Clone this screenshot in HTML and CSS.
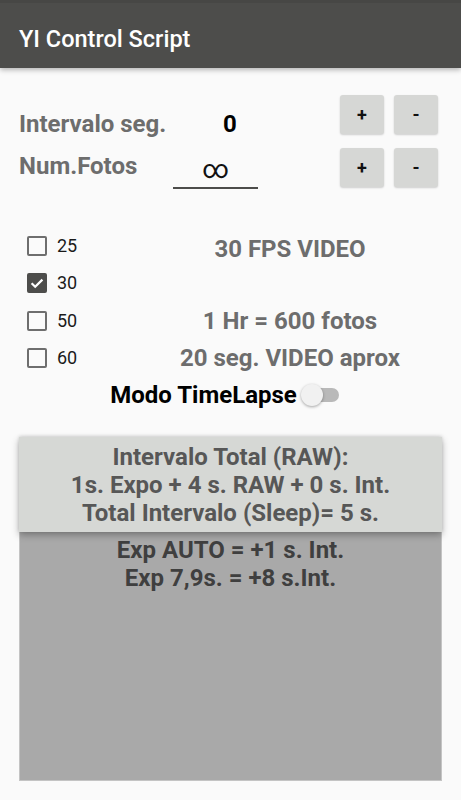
FILE: index.html
```html
<!DOCTYPE html>
<html lang="es">
<head>
<meta charset="utf-8">
<title>YI Control Script</title>
<link rel="stylesheet" href="styles.css">
</head>
<body>
<header class="appbar">
  <h1 class="appbar-title">YI Control Script</h1>
</header>
<main class="content">
  <section class="settings">
    <div class="row row-interval">
      <span class="label">Intervalo seg.</span>
      <span class="value">0</span>
      <div class="steppers">
        <button class="step">+</button>
        <button class="step">-</button>
      </div>
    </div>
    <div class="row row-photos">
      <span class="label">Num.Fotos</span>
      <span class="field">∞</span>
      <div class="steppers">
        <button class="step">+</button>
        <button class="step">-</button>
      </div>
    </div>
  </section>

  <section class="fps">
    <label class="check"><span class="box"></span><span class="check-text">25</span></label>
    <span class="summary summary-first">30 FPS VIDEO</span>
    <label class="check"><span class="box box-on"><svg viewBox="0 0 20 20" width="20" height="20"><path d="M4.6 10.2 L8.2 13.8 L15.4 6.6" fill="none" stroke="#fff" stroke-width="2.2"/></svg></span><span class="check-text">30</span></label>
    <span class="summary"></span>
    <label class="check"><span class="box"></span><span class="check-text">50</span></label>
    <span class="summary">1 Hr = 600 fotos</span>
    <label class="check"><span class="box"></span><span class="check-text">60</span></label>
    <span class="summary">20 seg. VIDEO aprox</span>
  </section>

  <div class="mode">
    <span class="mode-text">Modo TimeLapse</span>
    <span class="switch"><span class="switch-track"></span><span class="switch-thumb"></span></span>
  </div>

  <section class="result">
    <div class="result-top">
      <p>Intervalo Total (RAW):</p>
      <p>1s. Expo + 4 s. RAW + 0 s. Int.</p>
      <p>Total Intervalo (Sleep)= 5 s.</p>
    </div>
    <div class="result-bottom">
      <p>Exp AUTO = +1 s. Int.</p>
      <p>Exp 7,9s. = +8 s.Int.</p>
    </div>
  </section>
</main>
</body>
</html>
```

FILE: styles.css
```css
* { box-sizing: border-box; }

html, body {
  margin: 0;
  padding: 0;
  background: #fafafa;
  font-family: Roboto, "Liberation Sans", sans-serif;
}

.appbar {
  height: 68px;
  background: #4d4d4b;
  border-top: 3px solid #474745;
  box-shadow: 0 2px 5px rgba(0, 0, 0, 0.28);
  position: relative;
  z-index: 2;
}

.appbar-title {
  margin: 0;
  padding: 22px 0 0 19px;
  font-size: 23.5px;
  line-height: 28px;
  font-weight: 500;
  color: #ffffff;
}

.content {
  padding: 27px 19px 0 19px;
}

/* settings rows */
.settings {
  display: flex;
  flex-direction: column;
  gap: 14px;
}

.row {
  display: grid;
  grid-template-columns: 154px 85px 1fr auto;
  height: 39px;
  align-items: start;
}

.label {
  font-size: 24px;
  line-height: 28px;
  font-weight: 700;
  color: #6d6d6d;
  white-space: nowrap;
}

.row-interval .label { padding-top: 15px; }
.row-photos .label { padding-top: 4px; }

.value {
  padding: 15px 0 0 29px;
  text-align: center;
  font-size: 24px;
  line-height: 28px;
  font-weight: 700;
  color: #000;
}

.field {
  height: 41px;
  padding-top: 7px;
  text-align: center;
  font-size: 26px;
  line-height: 28px;
  color: #111;
  border-bottom: 2px solid #4c4c4a;
}

.steppers {
  grid-column: 4;
  display: flex;
  gap: 10px;
  padding-right: 4px;
}

.step {
  width: 44px;
  height: 39px;
  border: 0;
  border-radius: 3px;
  background: #d6d7d5;
  box-shadow: 0 1px 2px rgba(0, 0, 0, 0.18);
  font-family: Roboto, "Liberation Sans", sans-serif;
  font-size: 18px;
  font-weight: 700;
  color: #111;
  padding: 0;
}

/* fps block */
.fps {
  margin-top: 40px;
  display: grid;
  grid-template-columns: 119px 1fr;
  grid-auto-rows: 37.5px;
  align-items: center;
}

.check {
  display: flex;
  align-items: center;
  gap: 10px;
  padding-left: 8px;
}

.box {
  width: 20px;
  height: 20px;
  border: 2px solid #6e6e6e;
  border-radius: 2px;
  display: flex;
  align-items: center;
  justify-content: center;
}

.box-on {
  background: #4d4d4b;
  border-color: #4d4d4b;
}

.box-on svg { flex: none; }

.check-text {
  font-size: 18px;
  line-height: 22px;
  color: #1a1a1a;
}

.summary {
  text-align: center;
  font-size: 24px;
  line-height: 28px;
  font-weight: 700;
  color: #6d6d6d;
  white-space: nowrap;
}

.summary-first { padding-top: 6px; }

/* mode switch */
.mode {
  height: 36px;
  display: flex;
  align-items: center;
  justify-content: center;
  padding-right: 12px;
}

.mode-text {
  font-size: 24px;
  line-height: 28px;
  font-weight: 700;
  color: #000;
}

.switch {
  position: relative;
  width: 38px;
  height: 24px;
  margin-left: 4px;
}

.switch-track {
  position: absolute;
  left: 4px;
  top: 5px;
  width: 34px;
  height: 14px;
  border-radius: 7px;
  background: #b9b9b9;
}

.switch-thumb {
  position: absolute;
  left: 0;
  top: 1px;
  width: 22px;
  height: 22px;
  border-radius: 50%;
  background: #f1f1f1;
  box-shadow: 0 1px 3px rgba(0, 0, 0, 0.35);
}

/* result box */
.result {
  margin-top: 24px;
  display: flex;
  flex-direction: column;
}

.result p {
  margin: 0;
  text-align: center;
  font-size: 24px;
  line-height: 28px;
  font-weight: 700;
  white-space: nowrap;
}

.result-top {
  position: relative;
  z-index: 1;
  background: #d6d8d5;
  padding: 6px 0 5px 0;
  color: #575757;
  box-shadow: 0 -1px 3px rgba(0, 0, 0, 0.12), 0 3px 7px rgba(0, 0, 0, 0.3);
}

.result-bottom {
  height: 249px;
  background: #a9a9a9;
  padding-top: 4px;
  color: #3f3f3f;
  border: 1px solid #c4c4c4;
  border-top: 0;
}
```
